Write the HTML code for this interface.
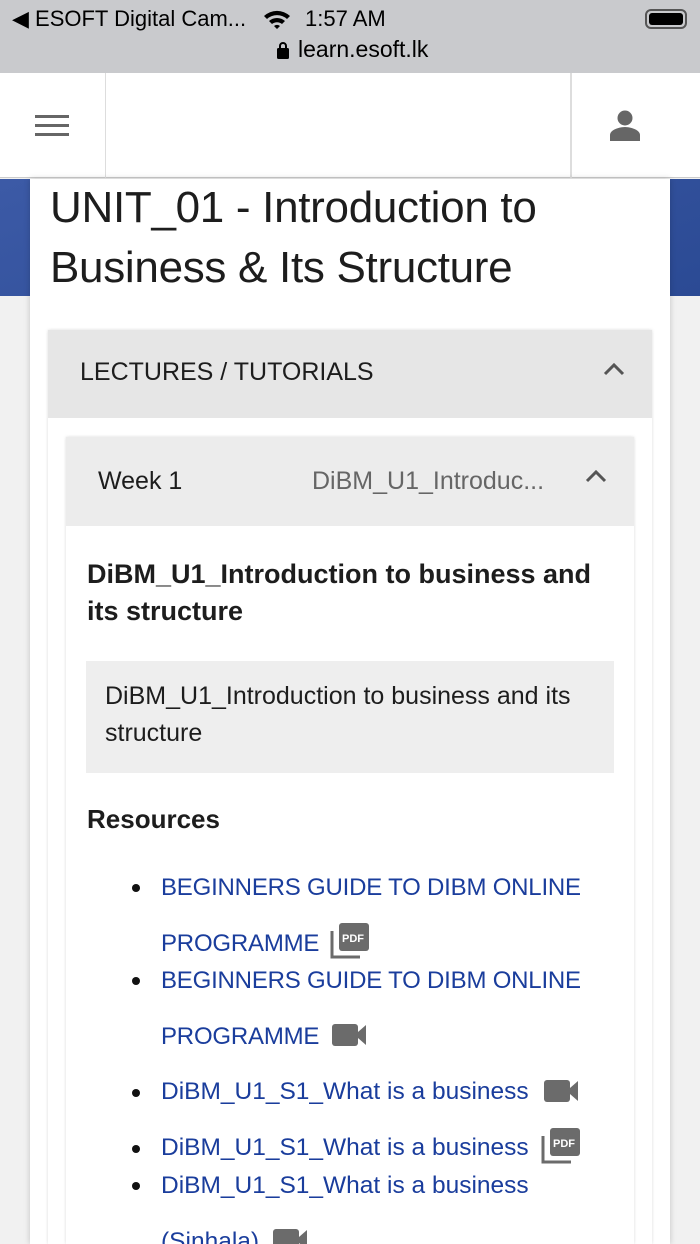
<!DOCTYPE html>
<html style="overflow:hidden;height:1244px"><head><meta charset="utf-8"><style>
*{margin:0;padding:0;box-sizing:border-box}
body{width:700px;height:1244px;overflow:hidden;background:#f1f1f1;font-family:"Liberation Sans",Arial,sans-serif;position:relative;color:#1d1d1d}
.a{position:absolute;white-space:nowrap}
.lnk{color:#1a3d9c;font-size:24.5px}
.up{font-size:24px;letter-spacing:-.2px}
.bul{width:8px;height:8px;border-radius:50%;background:#111;position:absolute;left:132px}
</style></head><body>
<div class="a" style="left:0;top:0;width:700px;height:73px;background:#c9cacd"></div>
<div class="a" style="left:12px;top:6px;font-size:22px;color:#000">◀ ESOFT Digital Cam...</div>
<svg class="a" style="left:262px;top:8px" width="30" height="22" viewBox="0 0 30 22"><path d="M2 8 A19 19 0 0 1 28 8 L25 11 A15 15 0 0 0 5 11Z M7 13 A12 12 0 0 1 23 13 L20 16 A8 8 0 0 0 10 16Z M12 18 A5 5 0 0 1 18 18 L15 21Z" fill="#000"/></svg>
<div class="a" style="left:305px;top:6px;font-size:22px;color:#000">1:57 AM</div>
<div class="a" style="left:645px;top:9px;width:42px;height:20px;border:2px solid #555;border-radius:6px;padding:2px"><div style="width:100%;height:100%;background:#000;border-radius:3px"></div></div>
<svg class="a" style="left:276px;top:41px" width="14" height="18"><rect x="1" y="7" width="12" height="11" rx="1.5" fill="#000"/><path d="M4 8V5a3 3 0 0 1 6 0v3" stroke="#000" stroke-width="2" fill="none"/></svg>
<div class="a" style="left:298px;top:36px;font-size:23px;color:#000">learn.esoft.lk</div>

<div class="a" style="left:0;top:73px;width:700px;height:105px;background:#fff;border-bottom:1px solid #ccc"></div>
<div class="a" style="left:105px;top:73px;width:1px;height:105px;background:#ddd"></div>
<div class="a" style="left:570px;top:73px;width:2px;height:105px;background:#ddd"></div>
<div class="a" style="left:35px;top:115px;width:34px;height:3px;background:#666;box-shadow:0 9px 0 #666,0 18px 0 #666"></div>
<svg class="a" style="left:608px;top:109px" width="34" height="32"><circle cx="17" cy="9" r="7.5" fill="#666"/><path d="M2 32v-6c0-5 9-8 15-8s15 3 15 8v6z" fill="#666"/></svg>

<div class="a" style="left:0;top:179px;width:700px;height:117px;background:linear-gradient(160deg,#3c5aa6,#2b4a94)"></div>
<div class="a" style="left:30px;top:179px;width:640px;height:1065px;background:#fff;box-shadow:0 0 6px rgba(0,0,0,.2)"></div>
<div class="a" style="left:50px;top:178px;font-size:44px;line-height:60px;letter-spacing:-.3px">UNIT_01 - Introduction to<br>Business &amp; Its Structure</div>

<div class="a" style="left:48px;top:330px;width:604px;height:914px;background:#fff;box-shadow:0 0 3px rgba(0,0,0,.15)"></div>
<div class="a" style="left:48px;top:330px;width:604px;height:88px;background:#e6e6e6"></div>
<div class="a" style="left:80px;top:358px;font-size:25px">LECTURES / TUTORIALS</div>
<svg class="a" style="left:603px;top:362px" width="22" height="14"><path d="M2 12L11 3l9 9" stroke="#555" stroke-width="3" fill="none"/></svg>

<div class="a" style="left:66px;top:437px;width:568px;height:807px;background:#fff;box-shadow:0 0 3px rgba(0,0,0,.15)"></div>
<div class="a" style="left:66px;top:437px;width:568px;height:89px;background:#ececec"></div>
<div class="a" style="left:98px;top:467px;font-size:25px">Week 1</div>
<div class="a" style="left:312px;top:467px;font-size:25px;color:#666">DiBM_U1_Introduc...</div>
<svg class="a" style="left:585px;top:469px" width="22" height="14"><path d="M2 12L11 3l9 9" stroke="#555" stroke-width="3" fill="none"/></svg>

<div class="a" style="left:87px;top:556px;font-size:27px;font-weight:bold;line-height:37px">DiBM_U1_Introduction to business and<br>its structure</div>
<div class="a" style="left:86px;top:661px;width:528px;height:112px;background:#eeeeee"></div>
<div class="a" style="left:105px;top:678px;font-size:25px;line-height:37px">DiBM_U1_Introduction to business and its<br>structure</div>
<div class="a" style="left:87px;top:804px;font-size:26px;font-weight:bold">Resources</div>

<div class="bul" style="top:884px"></div>
<div class="a lnk up" style="left:161px;top:860px;line-height:56px">BEGINNERS GUIDE TO DIBM ONLINE<br>PROGRAMME</div>
<svg class="a" style="left:330px;top:922px" width="40" height="38"><rect x="9" y="1" width="30" height="28" rx="3" fill="#6b6b6b"/><path d="M2 9v26h28" stroke="#6b6b6b" stroke-width="3" fill="none"/><text x="12" y="20" font-size="11" font-weight="bold" fill="#fff" font-family="Liberation Sans">PDF</text></svg>
<div class="bul" style="top:977px"></div>
<div class="a lnk up" style="left:161px;top:953px;line-height:56px">BEGINNERS GUIDE TO DIBM ONLINE<br>PROGRAMME</div>
<svg class="a" style="left:332px;top:1023px" width="36" height="24"><rect x="0" y="1" width="26" height="22" rx="3" fill="#6b6b6b"/><path d="M26 9l8-7v20l-8-7z" fill="#6b6b6b"/></svg>
<div class="bul" style="top:1089px"></div>
<div class="a lnk" style="left:161px;top:1078px">DiBM_U1_S1_What is a business</div>
<svg class="a" style="left:544px;top:1079px" width="36" height="24"><rect x="0" y="1" width="26" height="22" rx="3" fill="#6b6b6b"/><path d="M26 9l8-7v20l-8-7z" fill="#6b6b6b"/></svg>
<div class="bul" style="top:1145px"></div>
<div class="a lnk" style="left:161px;top:1134px">DiBM_U1_S1_What is a business</div>
<svg class="a" style="left:541px;top:1127px" width="40" height="38"><rect x="9" y="1" width="30" height="28" rx="3" fill="#6b6b6b"/><path d="M2 9v26h28" stroke="#6b6b6b" stroke-width="3" fill="none"/><text x="12" y="20" font-size="11" font-weight="bold" fill="#fff" font-family="Liberation Sans">PDF</text></svg>
<div class="bul" style="top:1182px"></div>
<div class="a lnk" style="left:161px;top:1158px;line-height:56px">DiBM_U1_S1_What is a business<br>(Sinhala)</div>
<svg class="a" style="left:273px;top:1228px" width="36" height="24"><rect x="0" y="1" width="26" height="22" rx="3" fill="#6b6b6b"/><path d="M26 9l8-7v20l-8-7z" fill="#6b6b6b"/></svg>
</body></html>
